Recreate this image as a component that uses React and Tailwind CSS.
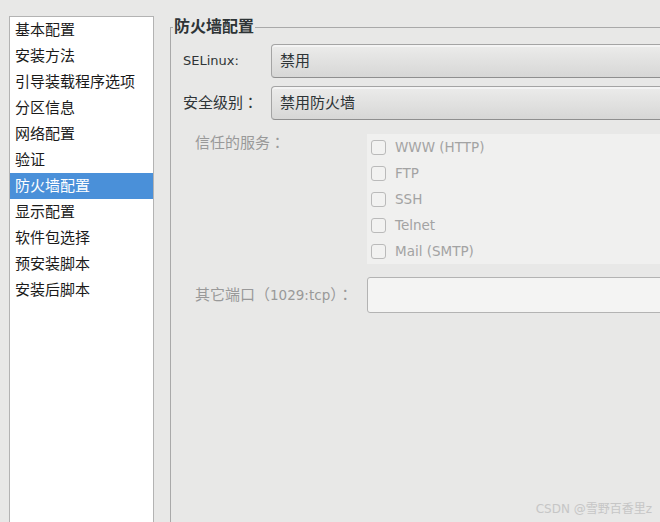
import React from "react";

const navItems = [
    "基本配置",
    "安装方法",
    "引导装载程序选项",
    "分区信息",
    "网络配置",
    "验证",
    "防火墙配置",
    "显示配置",
    "软件包选择",
    "预安装脚本",
    "安装后脚本",
];

const services = ["WWW (HTTP)", "FTP", "SSH", "Telnet", "Mail (SMTP)"];

// full-width colon, centred like the reference
const Colon = () => <span className="font-['Noto_Sans_CJK_TC',sans-serif]">：</span>;

const Combo = ({ value }) => (
    <div className="flex-1 h-[34px] flex items-center pl-[8px] rounded-l-[4px] border border-[#a4a4a4] border-b-[#8f8f8f] bg-gradient-to-b from-[#ececeb] to-[#d7d7d6] shadow-[inset_0_2px_0_#f4f4f4] text-[15px] text-[#2e3436]">
        {value}
    </div>
);

const App = () => {
    return (
        <div className="relative flex w-[660px] h-[522px] overflow-hidden bg-[#e8e8e7] font-['DejaVu_Sans','Noto_Sans_CJK_SC',sans-serif]">
            <ul className="ml-[9px] mt-[16px] w-[145px] h-[520px] shrink-0 border border-[#b3b3b3] bg-white">
                {navItems.map((item) => (
                    <li
                        key={item}
                        className={
                            item === "防火墙配置"
                                ? "h-[26px] flex items-center pl-[5px] text-[15px] bg-[#4a90d9] text-white"
                                : "h-[26px] flex items-center pl-[5px] text-[15px] text-[#1a1a1a]"
                        }
                    >
                        {item}
                    </li>
                ))}
            </ul>

            <fieldset className="ml-[16px] mt-[17px] w-[540px] shrink-0 border-l border-t border-[#a9a9a9]">
                <legend className="ml-[2px] px-[1px] leading-[20px] text-[16px] font-bold text-[#2e3436]">
                    防火墙配置
                </legend>

                <div className="pt-[7px]">
                    <div className="flex items-center h-[34px]">
                        <span className="w-[100px] pl-[12px] text-[13px] text-[#2e3436]">SELinux:</span>
                        <Combo value="禁用" />
                    </div>
                    <div className="flex items-center h-[34px] mt-[8px]">
                        <span className="w-[100px] pl-[12px] text-[15px] text-[#2e3436]">
                            安全级别<Colon />
                        </span>
                        <Combo value="禁用防火墙" />
                    </div>

                    <div className="flex mt-[14px]">
                        <span className="w-[196px] pl-[24px] leading-[15px] text-[15px] text-[#999999]">
                            信任的服务<Colon />
                        </span>
                        <div className="flex-1 h-[130px] bg-[#f0f0ef]">
                            {services.map((s) => (
                                <div key={s} className="h-[26px] flex items-center pl-[4px]">
                                    <span className="w-[15px] h-[15px] rounded-[3px] border border-[#bababa] bg-[#f2f2f1]" />
                                    <span className="ml-[9px] text-[13.5px] text-[#a3a3a3]">{s}</span>
                                </div>
                            ))}
                        </div>
                    </div>

                    <div className="flex items-center mt-[13px]">
                        <span className="w-[196px] pl-[24px] text-[15px] text-[#999999]">
                            其它端口（<span className="text-[13.5px]">1029:tcp</span>）<Colon />
                        </span>
                        <div className="flex-1 h-[36px] rounded-[3px] border border-[#b3b3b3] bg-[#f4f4f3]" />
                    </div>
                </div>
            </fieldset>

            <span className="absolute right-[8px] bottom-[4px] text-[12px] text-[#c6c6c6]">CSDN @雪野百香里z</span>
        </div>
    );
};

export default App;
